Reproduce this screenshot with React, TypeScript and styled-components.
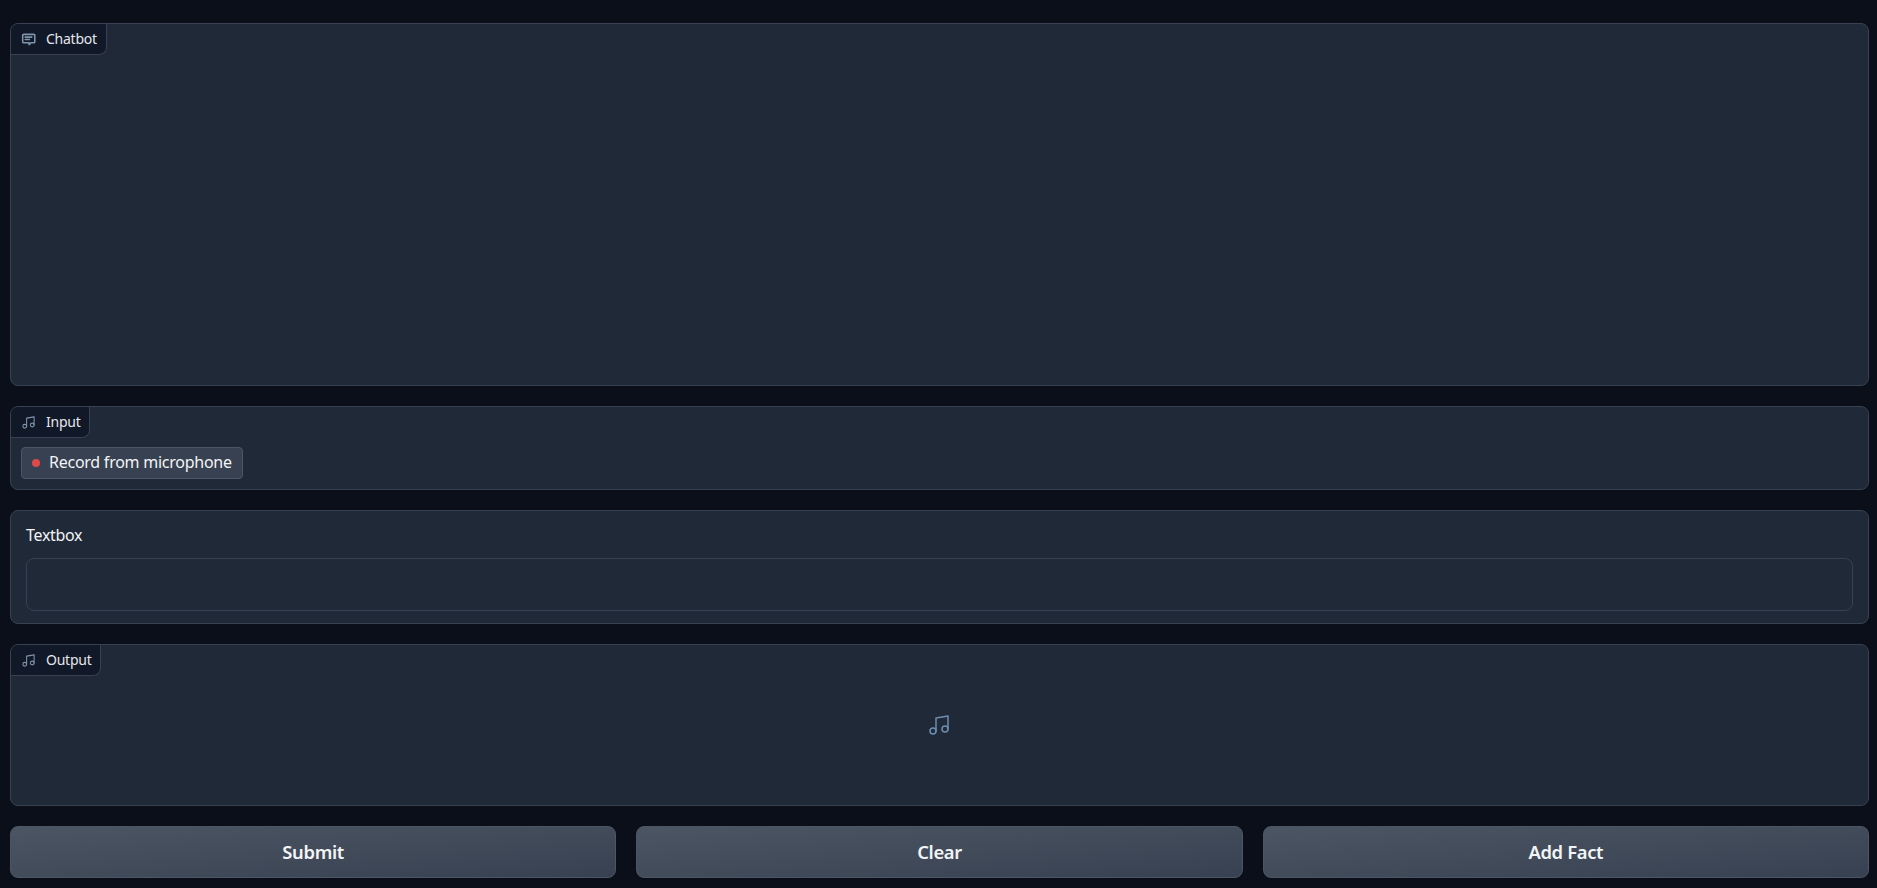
import React from "react";
import styled, { createGlobalStyle } from "styled-components";

const Global = createGlobalStyle`
  html, body { margin: 0; padding: 0; background: #0b0f19; }
  body { font-family: "Noto Sans", "Open Sans", sans-serif; color: #f3f4f6; }
  * { box-sizing: border-box; }
`;

const Page = styled.div`
  height: 888px;
  padding: 23px 8px 10px 10px;
  display: flex;
  flex-direction: column;
  gap: 20px;
`;

const Block = styled.section<{ $h: number }>`
  position: relative;
  height: ${(p) => p.$h}px;
  background: #1f2937;
  border: 1px solid #374151;
  border-radius: 8px;
  overflow: hidden;
  flex: none;
`;

const Tag = styled.div`
  position: absolute;
  top: 0;
  left: 0;
  height: 31px;
  display: flex;
  align-items: center;
  gap: 10px;
  padding: 0 9px 0 10px;
  background: #111827;
  border-right: 1px solid #374151;
  border-bottom: 1px solid #374151;
  border-bottom-right-radius: 8px;
  font-size: 14px;
  letter-spacing: -0.25px;
  line-height: 1;
  color: #e5e7eb;
`;

const TagIcon = styled.svg`
  width: 15px;
  height: 15px;
  flex: none;
  color: #7f93aa;
  fill: none;
  stroke: currentColor;
  stroke-width: 1.7;
  stroke-linecap: round;
  stroke-linejoin: round;
`;

const RecordRow = styled.div`
  position: absolute;
  top: 40px;
  left: 10px;
`;

const RecordButton = styled.button`
  height: 32px;
  display: flex;
  align-items: center;
  gap: 9px;
  padding: 0 10px 2px;
  background: #374151;
  border: 1px solid #4b5563;
  border-radius: 4px;
  color: #f3f4f6;
  font: 400 16px "Noto Sans", sans-serif;
  letter-spacing: -0.25px;
  line-height: 1;
`;

const Dot = styled.span`
  width: 8px;
  height: 8px;
  margin-top: 2px;
  border-radius: 50%;
  background: #dc4a4a;
`;

const TextPanel = styled(Block)`
  padding: 13px 15px 12px 15px;
  display: flex;
  flex-direction: column;
`;

const FieldLabel = styled.label`
  font-size: 16px;
  letter-spacing: -0.3px;
  line-height: 20px;
  color: #f3f4f6;
  margin-top: 1px;
  margin-bottom: 13px;
`;

const FieldInput = styled.div`
  height: 53px;
  border: 1px solid #374151;
  border-radius: 8px;
  background: #1f2937;
`;

const Empty = styled.div`
  height: 100%;
  display: flex;
  align-items: center;
  justify-content: center;
`;

const BigMusic = styled.svg`
  width: 24px;
  height: 24px;
  margin-left: -1px;
  color: #6d8db0;
  fill: none;
  stroke: currentColor;
  stroke-width: 1.5;
  stroke-linecap: round;
  stroke-linejoin: round;
`;

const Actions = styled.div`
  display: grid;
  grid-template-columns: repeat(3, 1fr);
  gap: 20px;
  height: 52px;
  flex: none;
`;

const Action = styled.button`
  border: 1px solid #4b5563;
  border-radius: 8px;
  background: linear-gradient(to bottom right, #4b5563, #374151);
  color: #f3f4f6;
  font: 600 18.4px "Noto Sans", sans-serif;
  letter-spacing: -0.35px;
  padding: 0 0 2px;
`;

const MusicPaths = () => (
  <>
    <path d="M9 18V5l12-2v13" />
    <circle cx="6" cy="18" r="3" />
    <circle cx="18" cy="16" r="3" />
  </>
);

export default function App() {
  return (
    <>
      <Global />
      <Page>
        <Block $h={363}>
          <Tag>
            <TagIcon viewBox="0 0 16 16">
              <path d="M3 2.5h10.5a1.2 1.2 0 0 1 1.2 1.2v6.6a1.2 1.2 0 0 1-1.2 1.2h-3l-1.8 2v-2H3a1.2 1.2 0 0 1-1.2-1.2V3.7A1.2 1.2 0 0 1 3 2.5z" />
              <path d="M4.5 5.5h7M4.5 8h4.5" />
            </TagIcon>
            Chatbot
          </Tag>
        </Block>
        <Block $h={84}>
          <Tag>
            <TagIcon viewBox="0 0 24 24"><MusicPaths /></TagIcon>
            Input
          </Tag>
          <RecordRow>
            <RecordButton><Dot />Record from microphone</RecordButton>
          </RecordRow>
        </Block>
        <TextPanel $h={114}>
          <FieldLabel>Textbox</FieldLabel>
          <FieldInput />
        </TextPanel>
        <Block $h={162}>
          <Tag>
            <TagIcon viewBox="0 0 24 24"><MusicPaths /></TagIcon>
            Output
          </Tag>
          <Empty>
            <BigMusic viewBox="0 0 24 24"><MusicPaths /></BigMusic>
          </Empty>
        </Block>
        <Actions>
          <Action>Submit</Action>
          <Action>Clear</Action>
          <Action>Add Fact</Action>
        </Actions>
      </Page>
    </>
  );
}
